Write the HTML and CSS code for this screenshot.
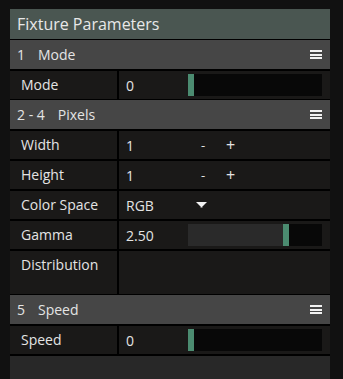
FILE: index.html
```html
<!DOCTYPE html>
<html>
<head>
<meta charset="utf-8">
<link rel="stylesheet" href="styles.css">
</head>
<body>
<div class="panel">
  <div class="title">Fixture Parameters</div>

  <div class="group first">
    <div class="head"><span class="num">1</span><span class="name">Mode</span><span class="menu"><i></i><i></i><i></i></span></div>
    <div class="row">
      <div class="label">Mode</div>
      <div class="value"><span class="val">0</span><div class="slider"><div class="fill" style="width:0px"></div><div class="knob"></div></div></div>
    </div>
  </div>

  <div class="group">
    <div class="head"><span class="num">2 - 4</span><span class="name">Pixels</span><span class="menu"><i></i><i></i><i></i></span></div>
    <div class="row">
      <div class="label">Width</div>
      <div class="value"><span class="val">1</span><span class="minus">-</span><span class="plus">+</span></div>
    </div>
    <div class="row">
      <div class="label">Height</div>
      <div class="value"><span class="val">1</span><span class="minus">-</span><span class="plus">+</span></div>
    </div>
    <div class="row">
      <div class="label">Color Space</div>
      <div class="value"><span class="val">RGB</span><svg class="caret" width="11" height="6" viewBox="0 0 11 6"><path d="M0 0H11L7 4H6.5V5.5H4.5V4H4Z" fill="#f2f2f2"/></svg></div>
    </div>
    <div class="row">
      <div class="label">Gamma</div>
      <div class="value"><span class="val">2.50</span><div class="slider"><div class="fill" style="width:95px"></div><div class="knob"></div></div></div>
    </div>
    <div class="row tall">
      <div class="label">Distribution</div>
      <div class="value"></div>
    </div>
  </div>

  <div class="group last">
    <div class="head"><span class="num">5</span><span class="name">Speed</span><span class="menu"><i></i><i></i><i></i></span></div>
    <div class="row">
      <div class="label">Speed</div>
      <div class="value"><span class="val">0</span><div class="slider"><div class="fill" style="width:0px"></div><div class="knob"></div></div></div>
    </div>
  </div>

  <div class="rest"></div>
</div>
</body>
</html>
```
FILE: styles.css
```css
html, body {
  margin: 0;
  padding: 0;
  background: #111111;
  height: 100%;
  overflow: hidden;
}
body {
  font-family: "Open Sans", "Noto Sans", sans-serif;
  color: #e4e4e4;
}
.panel {
  margin: 9px 0 0 10px;
  width: 320px;
  background: #000;
  display: flex;
  flex-direction: column;
  height: 370px;
}
.title {
  height: 30px;
  line-height: 30px;
  background: #4a5651;
  font-size: 16px;
  padding-left: 7px;
  color: #e8e8e8;
}
.group {
  display: flex;
  flex-direction: column;
  gap: 2px;
  margin-top: 1px;
}
.head {
  height: 29px;
  background: #464646;
  display: flex;
  align-items: center;
  font-size: 14px;
  padding: 0 8px 0 7px;
}
.num {
  margin-right: 13px;
  white-space: pre;
}
.name {
  flex: 1;
}
.menu {
  display: flex;
  flex-direction: column;
  gap: 1.5px;
  width: 12px;
}
.menu i {
  display: block;
  height: 2px;
  background: #f2f2f2;
}
.row {
  display: flex;
  gap: 2px;
  height: 28px;
}
.row.tall {
  height: 43px;
}
.label {
  width: 107px;
  background: #1a1918;
  font-size: 14px;
  padding: 5px 0 0 11px;
  box-sizing: border-box;
  line-height: 18px;
}
.value {
  flex: 1;
  background: #1a1918;
  display: flex;
  align-items: center;
  font-size: 14px;
  padding-left: 7px;
}
.val {
  width: 62px;
}
.slider {
  width: 134px;
  height: 22px;
  background: #080808;
  display: flex;
}
.fill {
  background: #2a2a2a;
}
.knob {
  width: 6px;
  background: #4b8b70;
}
.minus {
  width: 25px;
  padding-left: 13px;
  font-size: 13px;
}
.plus {
  font-size: 16px;
}
.caret {
  margin-left: 8px;
}
.rest {
  flex: 1;
  margin-top: 2px;
  background: #282828;
}
.last {
  margin-top: 1px;
}
```
